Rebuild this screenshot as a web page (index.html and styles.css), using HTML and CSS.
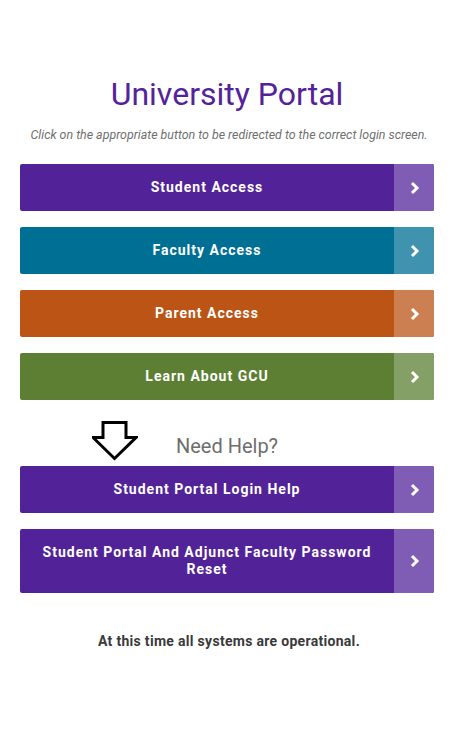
FILE: index.html
```html
<!DOCTYPE html>
<html>
<head>
<meta charset="utf-8">
<link rel="stylesheet" href="styles.css">
</head>
<body>
<main class="portal">
  <h1 class="title">University Portal</h1>
  <p class="subtitle">Click on the appropriate button to be redirected to the correct login screen.</p>
  <div class="buttons">
    <a class="btn purple"><span class="label">Student Access</span><span class="chev"><svg width="10" height="14" viewBox="0 0 10 14"><polyline points="2,2 7,7 2,12" fill="none" stroke="#fff" stroke-width="3"/></svg></span></a>
    <a class="btn teal"><span class="label">Faculty Access</span><span class="chev"><svg width="10" height="14" viewBox="0 0 10 14"><polyline points="2,2 7,7 2,12" fill="none" stroke="#fff" stroke-width="3"/></svg></span></a>
    <a class="btn orange"><span class="label">Parent Access</span><span class="chev"><svg width="10" height="14" viewBox="0 0 10 14"><polyline points="2,2 7,7 2,12" fill="none" stroke="#fff" stroke-width="3"/></svg></span></a>
    <a class="btn green"><span class="label">Learn About GCU</span><span class="chev"><svg width="10" height="14" viewBox="0 0 10 14"><polyline points="2,2 7,7 2,12" fill="none" stroke="#fff" stroke-width="3"/></svg></span></a>
  </div>
  <div class="help">
    <svg class="down" width="46" height="42" viewBox="0 0 46 42"><path d="M9.5 3.5 H32.5 V18.5 H42.5 L21 39.5 L-0.5 18.5 H9.5 Z" transform="translate(1.5,0)" fill="none" stroke="#000" stroke-width="3" stroke-linejoin="miter"/></svg>
    <h2 class="help-title">Need Help?</h2>
  </div>
  <div class="buttons">
    <a class="btn purple"><span class="label">Student Portal Login Help</span><span class="chev"><svg width="10" height="14" viewBox="0 0 10 14"><polyline points="2,2 7,7 2,12" fill="none" stroke="#fff" stroke-width="3"/></svg></span></a>
    <a class="btn purple tall"><span class="label">Student Portal And Adjunct Faculty Password Reset</span><span class="chev"><svg width="10" height="14" viewBox="0 0 10 14"><polyline points="2,2 7,7 2,12" fill="none" stroke="#fff" stroke-width="3"/></svg></span></a>
  </div>
  <p class="status">At this time all systems are operational.</p>
</main>
</body>
</html>
```
FILE: styles.css
```css
* { box-sizing: border-box; }
html, body { margin: 0; padding: 0; background: #fff; }
body { font-family: Roboto, "Liberation Sans", sans-serif; }
.portal { padding: 74px 24px 0 20px; display: flex; flex-direction: column; }
.title {
  margin: 0;
  text-align: center;
  font-weight: 400;
  font-size: 32px;
  line-height: 40px;
  color: #54229a;
}
.subtitle {
  margin: 14px 0 22px;
  text-align: center;
  font-style: italic;
  font-size: 12.4px;
  line-height: 14px;
  color: #707070;
  padding-left: 4px;
}
.buttons { display: flex; flex-direction: column; gap: 16px; }
.btn {
  display: flex;
  min-height: 47px;
  border-radius: 2px;
  overflow: hidden;
  color: #fff;
  font-weight: 700;
  font-size: 14px;
  letter-spacing: 1px;
}
.btn.tall { min-height: 64px; }
.label {
  flex: 1;
  display: flex;
  align-items: center;
  justify-content: center;
  text-align: center;
  padding: 0 18px;
  line-height: 17px;
}
.chev {
  width: 40px;
  display: flex;
  align-items: center;
  justify-content: center;
  padding-left: 2px;
}
.purple { background: #522398; }
.purple .chev { background: #7f5db4; }
.teal { background: #006f94; }
.teal .chev { background: #3f93af; }
.orange { background: #bb5415; }
.orange .chev { background: #cc7f50; }
.green { background: #5d7f34; }
.green .chev { background: #84a067; }
.help {
  position: relative;
  height: 66px;
  display: flex;
  align-items: flex-start;
  justify-content: center;
}
.down { position: absolute; left: 72px; top: 19px; }
.help-title {
  margin: 34px 0 0 0;
  font-weight: 400;
  font-size: 20px;
  line-height: 24px;
  color: #6e6e6e;
}
.status {
  margin: 40px 0 0;
  text-align: center;
  font-weight: 700;
  font-size: 14px;
  letter-spacing: 0.3px;
  color: #3a3a3a;
  padding-left: 4px;
}
```
